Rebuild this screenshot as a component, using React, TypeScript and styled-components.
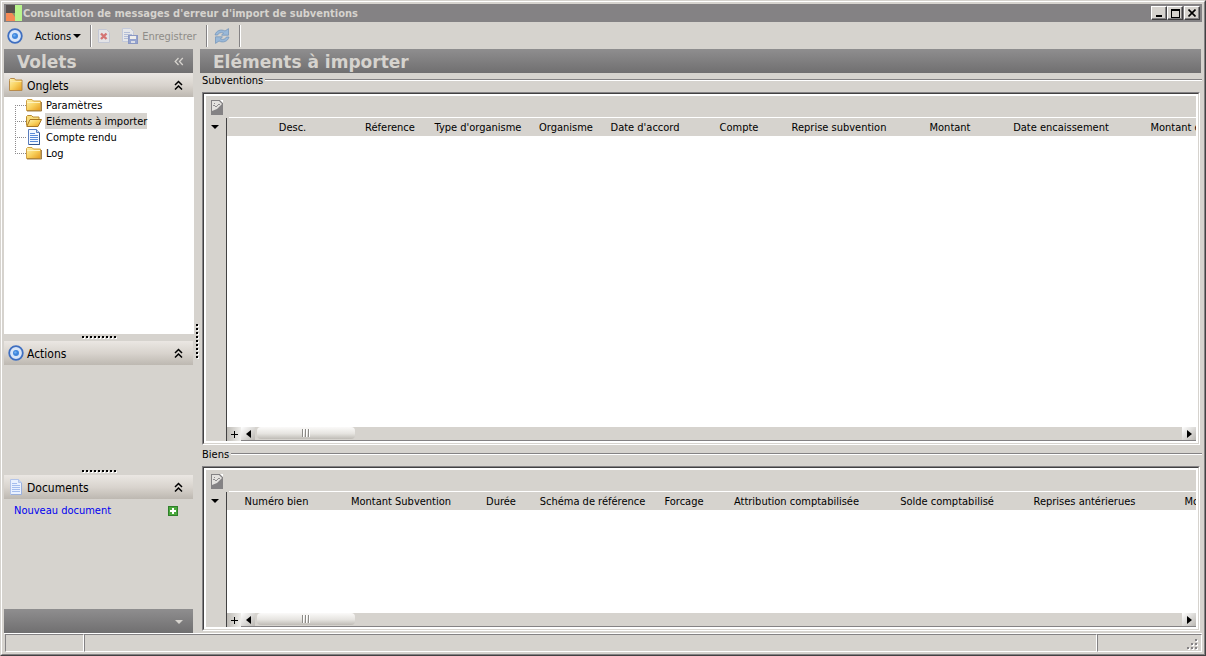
import React from "react";
import styled, { createGlobalStyle, css } from "styled-components";

const face = "#d6d3ce";
const shade = "#848284";
const dark = "#424142";

const GlobalStyle = createGlobalStyle`
  * { box-sizing: border-box; }
  html, body, #root { height: 100%; margin: 0; }
  body { background: ${face}; overflow: hidden; }
  body, button {
    font-family: "DejaVu Sans Condensed", "DejaVu Sans", sans-serif;
    font-stretch: condensed;
    font-size: 11px;
    line-height: 16px;
    color: #000;
  }
  button { border: 0; padding: 0; margin: 0; background: none; }
  svg { display: block; flex: none; }
`;

const Frame = styled.div`
  height: 100vh;
  border: 1px solid;
  border-color: ${face} ${dark} ${dark} ${face};
`;

const Window = styled.div`
  height: 100%;
  display: flex;
  flex-direction: column;
  padding: 2px;
  border: 1px solid;
  border-color: #fff ${shade} ${shade} #fff;
  background: ${face};
`;

const TitleBar = styled.header`
  height: 18px;
  flex: none;
  display: flex;
  align-items: center;
  gap: 1px;
  padding: 0 2px;
  background: ${shade};
`;

const WindowTitle = styled.h1`
  flex: 1;
  margin: 0;
  padding-top: 1px;
  font-size: 11px;
  font-weight: bold;
  color: ${face};
  white-space: nowrap;
`;

const CaptionButton = styled.button`
  width: 16px;
  height: 14px;
  flex: none;
  display: grid;
  place-items: center;
  background: ${face};
  border: 1px solid;
  border-color: #fff ${dark} ${dark} #fff;
  box-shadow: inset -1px -1px 0 ${shade};
  &:last-child { margin-left: 1px; }
`;

const CaptionButtons = styled.div`
  display: flex;
`;

const Toolbar = styled.div`
  height: 27px;
  flex: none;
  display: flex;
  align-items: center;
  padding-left: 3px;
`;

const ToolButton = styled.button<{ $indent?: boolean }>`
  display: flex;
  align-items: center;
  gap: ${(p) => (p.$indent ? 2 : 4)}px;
  padding: 0 4px 0 ${(p) => (p.$indent ? 12 : 4)}px;
  white-space: nowrap;
  &:disabled { color: #8e8c88; }
  span { padding-top: 2px; }
`;

const ToolSeparator = styled.span`
  width: 2px;
  height: 22px;
  margin: 0 2px 0 5px;
  background: linear-gradient(90deg, ${shade} 50%, #fff 50%);
`;

const Content = styled.div`
  flex: 1;
  min-height: 0;
  display: flex;
`;

const Sidebar = styled.aside`
  width: 189px;
  flex: none;
  display: flex;
  flex-direction: column;
`;

const Main = styled.main`
  flex: 1;
  min-width: 0;
  display: flex;
  flex-direction: column;
  padding-right: 1px;
`;

const bar = css`
  height: 24px;
  flex: none;
  background: linear-gradient(#8f8e8f, #706f70);
  color: ${face};
`;

const Heading = styled.div`
  ${bar}
  display: flex;
  align-items: center;
  justify-content: space-between;
  padding: 0 9px 0 13px;
`;

const HeadingText = styled.h2`
  margin: 0;
  padding-top: 1px;
  font-family: "DejaVu Sans", sans-serif;
  font-stretch: normal;
  font-size: 17px;
  font-weight: bold;
  line-height: 24px;
`;

const SidebarFooter = styled.div`
  ${bar}
  display: flex;
  align-items: center;
  justify-content: flex-end;
  padding: 2px 10px 0 0;
`;

const SectionHeader = styled.h3`
  height: 24px;
  flex: none;
  display: flex;
  align-items: center;
  gap: 3px;
  margin: 0;
  padding: 0 10px 0 4px;
  font-size: 12px;
  font-weight: normal;
  background: linear-gradient(#ebe7e3, #d9d4ce 50%, #bdb8b1);
  span { flex: 1; padding-top: 2px; }
`;

const SectionBody = styled.div<{ $height?: number }>`
  ${(p) => (p.$height ? `height: ${p.$height}px; flex: none;` : "flex: 1; min-height: 0;")}
`;

const TreePane = styled(SectionBody)`
  margin-right: -1px;
  background: #fff;
`;

const Grip = styled.i<{ $vertical?: boolean }>`
  display: block;
  width: ${(p) => (p.$vertical ? 3 : 35)}px;
  height: ${(p) => (p.$vertical ? 35 : 3)}px;
  ${(p) => {
    const dir = p.$vertical ? "180deg" : "90deg";
    const size = p.$vertical ? "2px 100%" : "100% 2px";
    return `background:
      repeating-linear-gradient(${dir}, #000 0 2px, transparent 2px 4px) 0 0 / ${size} no-repeat,
      repeating-linear-gradient(${dir}, #fff 0 2px, transparent 2px 4px) 1px 1px / ${size} no-repeat;`;
  }}
`;

const HorizontalSplitter = styled.div`
  height: 7px;
  flex: none;
  display: grid;
  place-items: center;
  padding-left: 1px;
`;

const VerticalSplitter = styled.div`
  width: 7px;
  flex: none;
  display: grid;
  place-items: center;
  padding-left: 2px;
`;

const Tree = styled.ul`
  list-style: none;
  margin: 0;
  padding: 0 0 0 11px;
`;

const TreeItem = styled.li`
  height: 16px;
  display: flex;
  align-items: center;
`;

const TreeLink = styled.a<{ $selected?: boolean }>`
  height: 16px;
  margin-left: 3px;
  padding: 1px 0 0 1px;
  color: #000;
  text-decoration: none;
  white-space: nowrap;
  background: ${(p) => (p.$selected ? face : "transparent")};
`;

const DocumentRow = styled.div`
  display: flex;
  align-items: center;
  justify-content: space-between;
  padding: 3px 15px 0 10px;
  a { padding-top: 1px; color: #0000f0; text-decoration: none; }
`;

const Group = styled.section<{ $height?: number }>`
  ${(p) => (p.$height ? `height: ${p.$height}px; flex: none;` : "flex: 1; min-height: 0;")}
  display: flex;
  flex-direction: column;
  padding: 0 1px 2px 2px;
`;

const GroupTitle = styled.h3`
  height: 14px;
  flex: none;
  display: flex;
  align-items: center;
  gap: 2px;
  margin: 0 -2px 5px 0;
  padding-top: 2px;
  font-size: 11px;
  font-weight: normal;
  line-height: 14px;
  &::after {
    content: "";
    flex: 1;
    height: 2px;
    margin-bottom: 2px;
    background: linear-gradient(${shade} 50%, #fff 50%);
  }
`;

const GridOuter = styled.div`
  flex: 1;
  min-height: 0;
  display: flex;
  border: 1px solid;
  border-color: ${shade} #fff #fff ${shade};
`;

const GridInner = styled.div`
  flex: 1;
  min-width: 0;
  display: flex;
  flex-direction: column;
  padding: 2px;
  border: 1px solid;
  border-color: ${dark} ${face} ${face} ${dark};
  background: #fff;
`;

const GridToolbar = styled.div`
  height: 22px;
  flex: none;
  display: flex;
  align-items: center;
  padding-left: 5px;
  background:
    linear-gradient(#fff, #fff) 23px 21px / 100% 1px no-repeat ${face};
`;

const GridBody = styled.div`
  flex: 1;
  min-height: 0;
  display: flex;
`;

const Gutter = styled.div`
  width: 21px;
  flex: none;
  background: ${face};
  border-right: 1px solid ${dark};
  padding: 7px 0 0 5px;
`;

const GridPane = styled.div`
  flex: 1;
  min-width: 0;
  display: flex;
  flex-direction: column;
  justify-content: space-between;
`;

const TableClip = styled.div`
  overflow: hidden;
  background: ${face};
`;

const Table = styled.table`
  table-layout: fixed;
  width: 0;
  border-collapse: collapse;
`;

const Th = styled.th<{ $width: number }>`
  width: ${(p) => p.$width}px;
  height: 18px;
  padding: 1px 0 0;
  font-weight: normal;
  text-align: center;
  white-space: nowrap;
`;

const ScrollRow = styled.div`
  height: 14px;
  display: flex;
  background: ${face};
  border-bottom: 1px solid ${shade};
`;

const AddButton = styled.button`
  width: 14px;
  height: 14px;
  display: grid;
  place-items: center;
  background: linear-gradient(90deg, #bdbab5, #efeeeb);
`;

const ScrollButton = styled.button`
  width: 14px;
  height: 13px;
  display: grid;
  place-items: center;
  background: linear-gradient(135deg, #fff, #bab7b2);
`;

const ScrollTrack = styled.div`
  flex: 1;
  display: flex;
  padding-left: 2px;
`;

const ScrollThumb = styled.div`
  width: 98px;
  height: 12px;
  display: grid;
  place-items: center;
  border-radius: 4px;
  background: linear-gradient(#fbfaf9, #e6e4e0 55%, #bfbcb6);
`;

const StatusBar = styled.footer`
  height: 19px;
  flex: none;
  display: flex;
  padding-left: 1px;
  border-top: 1px solid #fff;
`;

const StatusCell = styled.div<{ $width?: number }>`
  ${(p) => (p.$width ? `width: ${p.$width}px; flex: none;` : "flex: 1;")}
  display: flex;
  align-items: flex-end;
  justify-content: flex-end;
  padding: 0 3px 1px 0;
  border: 1px solid;
  border-color: ${shade} #fff #fff ${shade};
`;

const AppIcon = () => (
  <svg width="16" height="16">
    <rect width="9" height="8" fill="#56504e" />
    <rect y="8" width="9" height="8" fill="#f58a55" />
    <path d="M6 8l3 4V8z" fill="#8a9a6a" />
    <rect x="9" width="7" height="16" fill="#b9f48c" />
  </svg>
);

const TargetIcon = () => (
  <svg width="16" height="16">
    <circle cx="8" cy="8" r="6.8" fill="#d9e6f8" stroke="#3f6fc0" strokeWidth="1.8" />
    <circle cx="8" cy="8" r="3" fill="#3f86dc" />
    <circle cx="7.4" cy="7.4" r="1.2" fill="#6fb0f2" />
  </svg>
);

const DeleteIcon = () => (
  <svg width="16" height="16" opacity="0.55">
    <path d="M.5 1.5h8l3 3v10H.5z" fill="#eef1fa" stroke="#b4bfd9" />
    <path d="M3 5.500l5.500 5.500M8.500 5.500L3 11" stroke="#d3272c" strokeWidth="2.4" />
  </svg>
);

const SaveIcon = () => (
  <svg width="16" height="16" opacity="0.6">
    <path d="M.5.5h8l3 3v10H.5z" fill="#f2f5fc" stroke="#b7c3e2" />
    <path d="M2 4.5h6M2 6.5h8M2 8.5h4M2 10.5h4" stroke="#9db0dd" />
    <rect x="6.5" y="7.5" width="9" height="8" fill="#6b84cf" stroke="#5a72bd" />
    <rect x="8" y="8" width="6" height="3" fill="#fff" />
    <rect x="9" y="13" width="4" height="2" fill="#dfe5f5" />
  </svg>
);

const RefreshIcon = () => (
  <svg width="16" height="16" opacity="0.85" stroke="#5f87b5" strokeWidth="0.7" fill="#8fb4da">
    <path d="M1 7C2 2.600 7 .8 11 3L14.500.6V7.200H7.500L9.600 5C7 4 4.500 4.800 3.600 7z" />
    <path d="M15 9C14 13.400 9 15.200 5 13L1.500 15.400V8.800H8.500L6.400 11C9 12 11.500 11.200 12.400 9z" />
  </svg>
);

const FolderIcon = () => (
  <svg width="16" height="16">
    <defs>
      <linearGradient id="folder" x1="0" y1="0" x2="1" y2="1">
        <stop offset="0" stopColor="#fdf3b4" />
        <stop offset="0.5" stopColor="#f9d25f" />
        <stop offset="1" stopColor="#e59a1c" />
      </linearGradient>
    </defs>
    <path d="M.5 3.500l1-1h4.500l1.500 1.500h7v9.500H.5z" fill="url(#folder)" stroke="#cfa045" />
    <path d="M1 5.500h13" stroke="#fff3bd" />
    <path d="M15.500 5v9H1" stroke="#8a6222" strokeWidth="0.8" fill="none" />
  </svg>
);

const SectionFolderIcon = () => (
  <svg width="16" height="16">
    <path d="M1.500 3.500V2.500l1-1h4l1 1.500h6.500v10.500H1.500z" fill="url(#folder)" stroke="#b98b4a" />
    <path d="M2 4.500h11.500" stroke="#fbe6a2" />
  </svg>
);

const OpenFolderIcon = () => (
  <svg width="16" height="16">
    <path d="M.5 12.500v-9l1-1h4l1.500 1.500h6v2.500" fill="#f8dc7c" stroke="#b98a30" />
    <path d="M.8 13.500l3.200-7h11.500l-3.500 7z" fill="url(#folder)" stroke="#a87722" />
  </svg>
);

const PageIcon = ({ pale }: { pale?: boolean }) => (
  <svg width="16" height="16">
    <path
      d="M2.500.5h8l3 3v12h-11z"
      fill={pale ? "#eaf1ff" : "#f4f8ff"}
      stroke={pale ? "#b3c4ea" : "#5a7dbd"}
    />
    <path d="M13.500 4v11.500H3" fill="none" stroke={pale ? "#9bb0dc" : "#34568f"} />
    <path d="M10.500.5v3h3" fill="#c8d8f2" stroke={pale ? "#b3c4ea" : "#5a7dbd"} />
    <path d="M4 4.500h5M4 6.500h8M4 8.500h8M4 10.500h8M4 12.500h8" stroke={pale ? "#a5bdee" : "#5b8bd8"} />
  </svg>
);

const CollapseIcon = () => (
  <svg width="9" height="10" stroke="#000" strokeWidth="1.5" fill="none">
    <path d="M1 5l3.500-3.500L8 5M1 9.500L4.500 6 8 9.500" />
  </svg>
);

const CollapseLeftIcon = () => (
  <svg width="10" height="9" stroke={face} strokeWidth="1.3" fill="none">
    <path d="M4.500 1L1.200 4.500 4.500 8M8.800 1L5.500 4.500 8.800 8" />
  </svg>
);

const CaretIcon = ({ color = "#000" }: { color?: string }) => (
  <svg width="8" height="4">
    <path d="M0 0h8L4 4z" fill={color} />
  </svg>
);

const AddIcon = () => (
  <svg width="10" height="10">
    <rect x="0.5" y="0.5" width="9" height="9" fill="#4aa83c" stroke="#2f7f2a" />
    <path d="M5 2v6M2 5h6" stroke="#fff" strokeWidth="2" />
  </svg>
);

const GridIcon = () => (
  <svg width="12" height="15">
    <path d="M0 0h9l3 3v12H0z" fill={shade} />
    <path d="M1 1h7l3 3-5 5-5 2z" fill="#e4e2df" />
    <path d="M2 5.500h2M4 6.500h2M6 5.500h1M7 4.500h2M3 3.500h1" stroke="#8f8d8f" />
    <path d="M9 0h3v3z" fill="#fff" />
  </svg>
);

const PlusIcon = () => (
  <svg width="7" height="7">
    <path d="M3.500 0v7M0 3.500h7" stroke="#000" />
  </svg>
);

const ArrowIcon = ({ right }: { right?: boolean }) => (
  <svg width="5" height="8">
    <path d={right ? "M0 0v8l5-4z" : "M5 0v8L0 4z"} />
  </svg>
);

const ThumbLines = () => (
  <svg width="8" height="8">
    <path d="M.5 0v8M3.500 0v8M6.500 0v8" stroke="#8c8a86" />
    <path d="M1.500 0v8M4.500 0v8M7.500 0v8" stroke="#fff" />
  </svg>
);

const SizeGrip = () => (
  <svg width="11" height="11" fill={shade}>
    <path d="M9 1h2v2H9zM5 5h2v2H5zM9 5h2v2H9zM1 9h2v2H1zM5 9h2v2H5zM9 9h2v2H9z" fill="#fff" />
    <path d="M8 0h2v2H8zM4 4h2v2H4zM8 4h2v2H8zM0 8h2v2H0zM4 8h2v2H4zM8 8h2v2H8z" />
  </svg>
);

const Branch = ({ last, first }: { last?: boolean; first?: boolean }) => (
  <svg width="11" height="16" stroke="#8c8a8c" strokeDasharray="1 1">
    <path d={`M.5 ${first ? 8 : 0}V${last ? 8 : 16}M0 8.5h11`} fill="none" />
  </svg>
);

type Column = [label: string, width: number];

const subsidyColumns: Column[] = [
  ["Desc.", 131],
  ["Réference", 64],
  ["Type d'organisme", 112],
  ["Organisme", 64],
  ["Date d'accord", 94],
  ["Compte", 94],
  ["Reprise subvention", 106],
  ["Montant", 116],
  ["Date encaissement", 106],
  ["Montant encaissé", 160],
];

const assetColumns: Column[] = [
  ["Numéro bien", 99],
  ["Montant Subvention", 150],
  ["Durée", 50],
  ["Schéma de référence", 133],
  ["Forcage", 50],
  ["Attribution comptabilisée", 175],
  ["Solde comptabilisé", 126],
  ["Reprises antérierues", 149],
  ["Montant", 92],
];

const tabs = [
  { label: "Paramètres", icon: <FolderIcon /> },
  { label: "Eléments à importer", icon: <OpenFolderIcon />, selected: true },
  { label: "Compte rendu", icon: <PageIcon /> },
  { label: "Log", icon: <FolderIcon /> },
];

function DataGrid({ columns, label }: { columns: Column[]; label: string }) {
  return (
    <GridOuter>
      <GridInner>
        <GridToolbar>
          <GridIcon />
        </GridToolbar>
        <GridBody>
          <Gutter>
            <CaretIcon />
          </Gutter>
          <GridPane>
            <TableClip>
              <Table aria-label={label}>
                <thead>
                  <tr>
                    {columns.map(([name, width]) => (
                      <Th key={name} $width={width} scope="col">
                        {name}
                      </Th>
                    ))}
                  </tr>
                </thead>
              </Table>
            </TableClip>
            <ScrollRow>
              <AddButton aria-label="Ajouter">
                <PlusIcon />
              </AddButton>
              <ScrollButton aria-label="Gauche">
                <ArrowIcon />
              </ScrollButton>
              <ScrollTrack>
                <ScrollThumb>
                  <ThumbLines />
                </ScrollThumb>
              </ScrollTrack>
              <ScrollButton aria-label="Droite">
                <ArrowIcon right />
              </ScrollButton>
            </ScrollRow>
          </GridPane>
        </GridBody>
      </GridInner>
    </GridOuter>
  );
}

export default function App() {
  return (
    <Frame>
      <GlobalStyle />
      <Window>
        <TitleBar>
          <AppIcon />
          <WindowTitle>Consultation de messages d'erreur d'import de subventions</WindowTitle>
          <CaptionButtons>
            <CaptionButton aria-label="Réduire">
              <svg width="8" height="8"><path d="M1 6h6v2H1z" /></svg>
            </CaptionButton>
            <CaptionButton aria-label="Agrandir">
              <svg width="9" height="9"><path d="M0 0h9v9H0zM1 2v6h7V2z" fillRule="evenodd" /></svg>
            </CaptionButton>
            <CaptionButton aria-label="Fermer">
              <svg width="8" height="8"><path d="M.5.5l7 7M7.500.5l-7 7" stroke="#000" strokeWidth="1.6" /></svg>
            </CaptionButton>
          </CaptionButtons>
        </TitleBar>
        <Toolbar>
          <TargetIcon />
          <ToolButton $indent>
            <span>Actions</span>
            <CaretIcon />
          </ToolButton>
          <ToolSeparator />
          <ToolButton disabled aria-label="Supprimer">
            <DeleteIcon />
          </ToolButton>
          <ToolButton disabled>
            <SaveIcon />
            <span>Enregistrer</span>
          </ToolButton>
          <ToolSeparator />
          <ToolButton aria-label="Actualiser">
            <RefreshIcon />
          </ToolButton>
          <ToolSeparator />
        </Toolbar>
        <Content>
          <Sidebar>
            <Heading>
              <HeadingText>Volets</HeadingText>
              <button aria-label="Masquer les volets">
                <CollapseLeftIcon />
              </button>
            </Heading>
            <SectionHeader>
              <SectionFolderIcon />
              <span>Onglets</span>
              <CollapseIcon />
            </SectionHeader>
            <TreePane>
              <Tree>
                {tabs.map((tab, i) => (
                  <TreeItem key={tab.label}>
                    <Branch first={i === 0} last={i === tabs.length - 1} />
                    {tab.icon}
                    <TreeLink href="#" $selected={tab.selected}>
                      {tab.label}
                    </TreeLink>
                  </TreeItem>
                ))}
              </Tree>
            </TreePane>
            <HorizontalSplitter>
              <Grip />
            </HorizontalSplitter>
            <SectionHeader>
              <TargetIcon />
              <span>Actions</span>
              <CollapseIcon />
            </SectionHeader>
            <SectionBody $height={103} />
            <HorizontalSplitter>
              <Grip />
            </HorizontalSplitter>
            <SectionHeader>
              <PageIcon pale />
              <span>Documents</span>
              <CollapseIcon />
            </SectionHeader>
            <SectionBody $height={110}>
              <DocumentRow>
                <a href="#">Nouveau document</a>
                <button aria-label="Ajouter un document">
                  <AddIcon />
                </button>
              </DocumentRow>
            </SectionBody>
            <SidebarFooter>
              <CaretIcon color={face} />
            </SidebarFooter>
          </Sidebar>
          <VerticalSplitter>
            <Grip $vertical />
          </VerticalSplitter>
          <Main>
            <Heading>
              <HeadingText>Eléments à importer</HeadingText>
            </Heading>
            <Group>
              <GroupTitle>Subventions</GroupTitle>
              <DataGrid columns={subsidyColumns} label="Subventions" />
            </Group>
            <Group $height={186}>
              <GroupTitle>Biens</GroupTitle>
              <DataGrid columns={assetColumns} label="Biens" />
            </Group>
          </Main>
        </Content>
        <StatusBar>
          <StatusCell $width={79} />
          <StatusCell />
          <StatusCell $width={105}>
            <SizeGrip />
          </StatusCell>
        </StatusBar>
      </Window>
    </Frame>
  );
}
